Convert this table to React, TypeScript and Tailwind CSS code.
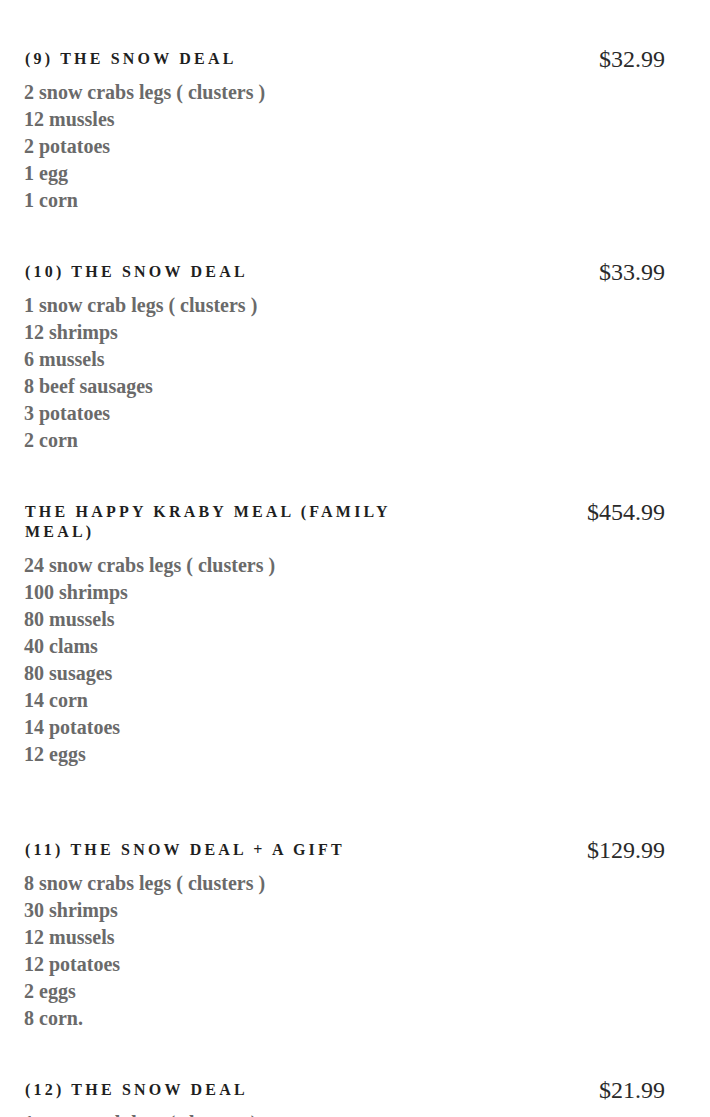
const deals = [
  {
    title: "(9) THE SNOW DEAL",
    price: "$32.99",
    items: ["2 snow crabs legs ( clusters )", "12 mussles", "2 potatoes", "1 egg", "1 corn"],
    gap: "mb-[48px]",
  },
  {
    title: "(10) THE SNOW DEAL",
    price: "$33.99",
    items: ["1 snow crab legs ( clusters )", "12 shrimps", "6 mussels", "8 beef sausages", "3 potatoes", "2 corn"],
    gap: "mb-[48px]",
  },
  {
    title: "THE HAPPY KRABY MEAL (FAMILY MEAL)",
    price: "$454.99",
    items: [
      "24 snow crabs legs ( clusters )",
      "100 shrimps",
      "80 mussels",
      "40 clams",
      "80 susages",
      "14 corn",
      "14 potatoes",
      "12 eggs",
    ],
    gap: "mb-[72px]",
  },
  {
    title: "(11) THE SNOW DEAL + A GIFT",
    price: "$129.99",
    items: ["8 snow crabs legs ( clusters )", "30 shrimps", "12 mussels", "12 potatoes", "2 eggs", "8 corn."],
    gap: "mb-[48px]",
  },
  {
    title: "(12) THE SNOW DEAL",
    price: "$21.99",
    items: ["1 snow crab legs ( clusters )", "6 shrimps", "1 potatoe", "1 corn"],
    gap: "mb-[47px]",
  },
];

export default function App() {
  return (
    <main
      className="min-h-screen bg-white pt-[49px] pl-[25px] pr-[45px]"
      style={{ fontFamily: '"Liberation Serif", "Times New Roman", serif' }}
    >
      {deals.map((deal) => (
        <section key={deal.title} className={`flex items-start justify-between ${deal.gap}`}>
          <div className="w-[405px]">
            <h3 className="text-[16px] leading-[20px] font-bold tracking-[0.2em] text-[#1f1f1f]">{deal.title}</h3>
            <ul className="mt-[10px]">
              {deal.items.map((item) => (
                <li key={item} className="-ml-px text-[20px] leading-[27px] font-bold text-[#6a6a6a]">
                  {item}
                </li>
              ))}
            </ul>
          </div>
          <p className="-mt-[4px] text-[24px] leading-[28px] text-[#2a2a2a]">{deal.price}</p>
        </section>
      ))}
    </main>
  );
}
